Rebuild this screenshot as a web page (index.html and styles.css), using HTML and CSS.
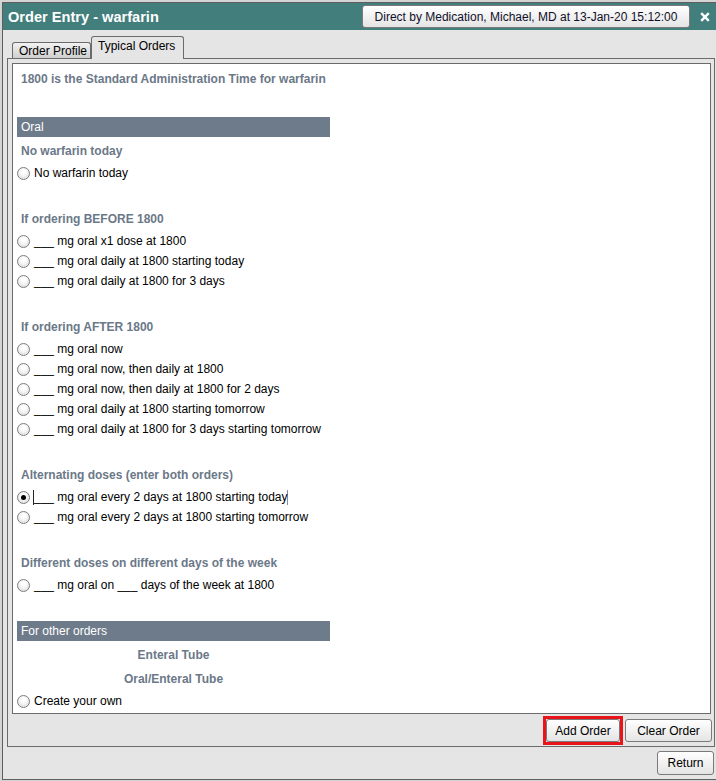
FILE: index.html
```html
<!DOCTYPE html>
<html>
<head>
<meta charset="utf-8">
<title>Order Entry - warfarin</title>
<link rel="stylesheet" href="styles.css">
</head>
<body>
<div class="window">
  <div class="titlebar">
    <span class="title">Order Entry - warfarin</span>
    <button class="btn provider">Direct by Medication, Michael, MD at 13-Jan-20 15:12:00</button>
    <span class="close"><svg width="10" height="10" viewBox="0 0 10 10"><path d="M1.2 1.2 L8.8 8.8 M8.8 1.2 L1.2 8.8" stroke="#fff" stroke-width="2.4" fill="none"/></svg></span>
  </div>
  <div class="tabs">
    <div class="tab">Order Profile</div>
    <div class="tab active">Typical Orders</div>
  </div>
  <div class="panel">
    <div class="sheet">
      <div class="intro">1800 is the Standard Administration Time for warfarin</div>
      <div class="bar">Oral</div>
      <div class="group first">
        <div class="heading">No warfarin today</div>
        <div class="opt"><span class="radio"></span><span>No warfarin today</span></div>
      </div>
      <div class="group">
        <div class="heading">If ordering BEFORE 1800</div>
        <div class="opt"><span class="radio"></span><span>___ mg oral x1 dose at 1800</span></div>
        <div class="opt"><span class="radio"></span><span>___ mg oral daily at 1800 starting today</span></div>
        <div class="opt"><span class="radio"></span><span>___ mg oral daily at 1800 for 3 days</span></div>
      </div>
      <div class="group">
        <div class="heading">If ordering AFTER 1800</div>
        <div class="opt"><span class="radio"></span><span>___ mg oral now</span></div>
        <div class="opt"><span class="radio"></span><span>___ mg oral now, then daily at 1800</span></div>
        <div class="opt"><span class="radio"></span><span>___ mg oral now, then daily at 1800 for 2 days</span></div>
        <div class="opt"><span class="radio"></span><span>___ mg oral daily at 1800 starting tomorrow</span></div>
        <div class="opt"><span class="radio"></span><span>___ mg oral daily at 1800 for 3 days starting tomorrow</span></div>
      </div>
      <div class="group">
        <div class="heading">Alternating doses (enter both orders)</div>
        <div class="opt"><span class="radio checked"></span><span class="focused">___ mg oral every 2 days at 1800 starting today</span></div>
        <div class="opt"><span class="radio"></span><span>___ mg oral every 2 days at 1800 starting tomorrow</span></div>
      </div>
      <div class="group">
        <div class="heading">Different doses on different days of the week</div>
        <div class="opt"><span class="radio"></span><span>___ mg oral on ___ days of the week at 1800</span></div>
      </div>
      <div class="bar spaced">For other orders</div>
      <div class="center">Enteral Tube</div>
      <div class="center">Oral/Enteral Tube</div>
      <div class="opt last"><span class="radio"></span><span>Create your own</span></div>
    </div>
    <div class="actions">
      <span class="highlight"><button class="btn add">Add Order</button></span>
      <button class="btn clear">Clear Order</button>
    </div>
  </div>
  <div class="footer">
    <button class="btn return">Return</button>
  </div>
</div>
</body>
</html>
```
FILE: styles.css
```css
html, body {
  margin: 0;
  padding: 0;
  overflow: hidden;
}
body {
  background: #d4d4d4;
  font-family: "Liberation Sans", Arial, sans-serif;
  font-size: 12px;
  color: #000;
}
.window {
  margin: 2px 0 0 2px;
  width: 713px;
  height: 776px;
  border: 1px solid #5e5e5e;
  border-right: none;
  background: #e5e5e5;
  display: flex;
  flex-direction: column;
}
.titlebar {
  height: 27px;
  flex: none;
  background: #417e7c;
  display: flex;
  align-items: center;
  padding-left: 5px;
}
.title {
  color: #fff;
  font-weight: bold;
  font-size: 14.6px;
  padding-top: 1px;
}
.btn {
  font-family: "Liberation Sans", Arial, sans-serif;
  font-size: 12px;
  color: #000;
  background: linear-gradient(#ffffff, #e4e4e4);
  border: 1px solid #7a7a7a;
  border-radius: 3px;
  padding: 0;
  margin: 0;
  box-sizing: border-box;
}
.provider {
  margin-left: auto;
  width: 328px;
  height: 23px;
  color: #10102a;
  margin-right: 10px;
}
.close {
  width: 10px;
  height: 10px;
  margin-right: 6px;
  display: flex;
}
.tabs {
  height: 28px;
  flex: none;
  display: flex;
  align-items: flex-end;
  padding-left: 9px;
  box-sizing: border-box;
}
.tab {
  box-sizing: border-box;
  border: 1px solid #6b6b6b;
  border-bottom: none;
  border-radius: 3px 3px 0 0;
  height: 16px;
  width: 79px;
  line-height: 16px;
  padding-left: 6px;
  background: linear-gradient(#f2f2f2, #cfcfcf);
}
.tab.active {
  height: 23px;
  width: 93px;
  line-height: 19px;
  padding-left: 6px;
  background: #e5e5e5;
  margin-bottom: -1px;
  position: relative;
  z-index: 1;
}
.panel {
  flex: none;
  margin-left: 4px;
  width: 708px;
  height: 689px;
  box-sizing: border-box;
  border: 1px solid #6b6b6b;
  padding: 4px 3px 0 4px;
}
.sheet {
  width: 699px;
  height: 651px;
  box-sizing: border-box;
  background: #fff;
  border: 1px solid #6b6b6b;
  padding: 5px 0 0 4px;
}
.intro, .heading {
  line-height: 20px;
  height: 20px;
  padding-left: 4px;
  font-weight: bold;
  color: #6b7888;
}
.bar {
  margin-top: 28px;
  width: 313px;
  height: 20px;
  line-height: 20px;
  box-sizing: border-box;
  padding-left: 4px;
  background: #6e7b8a;
  color: #fff;
}
.bar.spaced {
  margin-top: 26px;
}
.group {
  margin-top: 26px;
}
.group.first {
  margin-top: 4px;
}
.heading {
  margin-bottom: 2px;
}
.opt {
  height: 20px;
  display: flex;
  align-items: center;
  gap: 4px;
  white-space: nowrap;
}
.radio {
  width: 13px;
  height: 13px;
  box-sizing: border-box;
  border: 1px solid #7c7c7c;
  border-radius: 50%;
  background: radial-gradient(circle at 50% 35%, #ffffff 20%, #d9d9d9 100%);
  display: flex;
  align-items: center;
  justify-content: center;
  flex: none;
}
.radio.checked::after {
  content: "";
  width: 5px;
  height: 5px;
  border-radius: 50%;
  background: #000;
}
.focused {
  border-left: 1px solid #222;
  border-right: 1px solid #7d8fb0;
  margin-left: -1px;
  line-height: 15px;
}
.center {
  width: 313px;
  text-align: center;
  margin-top: 4px;
  line-height: 20px;
  height: 20px;
  font-weight: bold;
  color: #6b7888;
}
.opt.last {
  margin-top: 2px;
}
.actions {
  display: flex;
  justify-content: flex-end;
  gap: 5px;
  padding-top: 5px;
  margin-right: -1px;
}
.actions .btn {
  height: 23px;
}
.highlight {
  display: flex;
  outline: 3px solid #e8141a;
}
.add {
  width: 74px;
}
.clear {
  width: 87px;
}
.footer {
  flex: none;
  display: flex;
  justify-content: flex-end;
  padding-top: 4px;
  padding-right: 2px;
}
.return {
  width: 57px;
  height: 24px;
}
```
